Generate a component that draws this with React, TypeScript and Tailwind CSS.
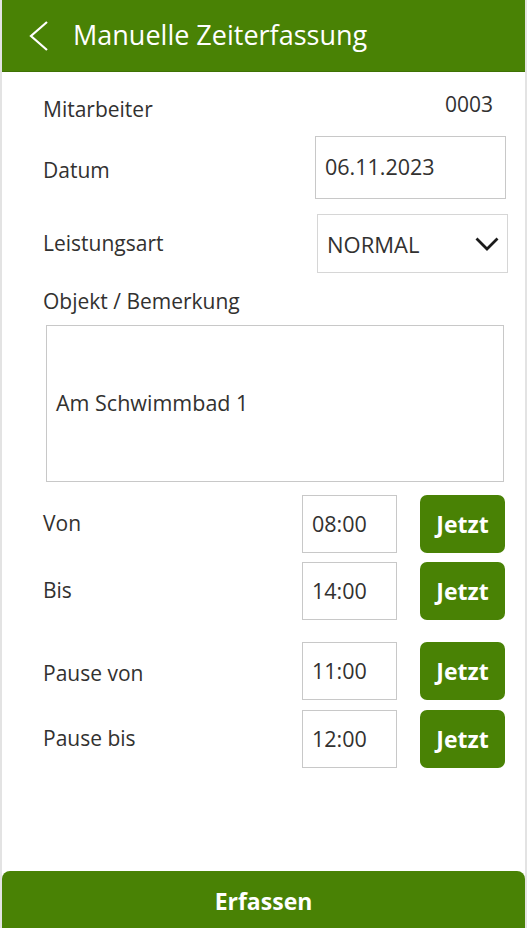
import React from 'react';

const font = { fontFamily: '"Open Sans", "Noto Sans", sans-serif' };

function TimeRow({ label, value, className, labelClass }: { label: string; value: string; className: string; labelClass?: string }) {
  return (
    <div className={`flex items-center h-[58px] ${className}`}>
      <span className={`ml-[41px] text-[21px] text-[#323130] ${labelClass ?? ''}`}>{label}</span>
      <div className="ml-auto flex items-center h-full">
        <div className="w-[95px] h-full border border-[#c8c8c8] flex items-center pl-[9px] text-[21.5px] text-[#323130]">
          {value}
        </div>
        <button className="ml-[23px] mr-[20px] w-[85px] h-full rounded-[7px] bg-[#498205] text-white text-[23px] font-bold">
          Jetzt
        </button>
      </div>
    </div>
  );
}

export default function App() {
  return (
    <div style={font} className="h-[928px] flex flex-col bg-white border-x-2 border-[#e3e3e3] overflow-hidden">
      <header className="h-[72px] shrink-0 bg-[#498205] border-b border-[#3f7204] flex items-center">
        <svg width="20" height="32" viewBox="0 0 20 32" className="ml-[27px]" fill="none" stroke="white" strokeWidth="2.2">
          <polyline points="18,2 2,16 18,30" />
        </svg>
        <h1 className="ml-[24px] text-[27px] text-white leading-none pb-[2px]">Manuelle Zeiterfassung</h1>
      </header>

      <div className="flex items-start justify-between mt-[17px] h-[41px]">
        <span className="ml-[41px] mt-[5px] text-[21px] text-[#323130]">Mitarbeiter</span>
        <span className="mr-[32px] text-[21px] text-[#323130]">0003</span>
      </div>

      <div className="flex items-center mt-[6px] h-[63px]">
        <span className="ml-[41px] mt-[6px] text-[21px] text-[#323130]">Datum</span>
        <div className="ml-auto mr-[19px] w-[191px] h-full border border-[#c8c8c8] flex items-center pl-[9px] text-[21.5px] text-[#323130]">
          06.11.2023
        </div>
      </div>

      <div className="flex items-center mt-[15px] h-[59px]">
        <span className="ml-[41px] text-[21px] text-[#323130]">Leistungsart</span>
        <div className="ml-auto mr-[17px] w-[191px] h-full border border-[#d6d6d6] flex items-center pl-[9px] pr-[8px] text-[22px] text-[#323130]">
          <span className="mt-[2px]">NORMAL</span>
          <svg width="24" height="14" viewBox="0 0 24 14" className="ml-auto" fill="none" stroke="#1b1b1b" strokeWidth="2.8">
            <polyline points="1.5,1.5 12,12 22.5,1.5" />
          </svg>
        </div>
      </div>

      <div className="mt-[14px] ml-[41px] text-[21px] text-[#323130] leading-[28px]">Objekt / Bemerkung</div>

      <div className="mt-[10px] ml-[44px] mr-[21px] h-[157px] border border-[#c8c8c8] flex items-center pl-[9px] text-[21.5px] text-[#323130]">
        Am Schwimmbad 1
      </div>

      <TimeRow label="Von" value="08:00" className="mt-[13px]" />
      <TimeRow label="Bis" value="14:00" className="mt-[9px]" />
      <TimeRow label="Pause von" value="11:00" className="mt-[22px]" labelClass="mt-[5px]" />
      <TimeRow label="Pause bis" value="12:00" className="mt-[10px]" />

      <button className="mt-auto h-[57px] shrink-0 rounded-t-[8px] bg-[#498205] pt-[3px] text-white text-[23px] font-bold">
        Erfassen
      </button>
    </div>
  );
}
